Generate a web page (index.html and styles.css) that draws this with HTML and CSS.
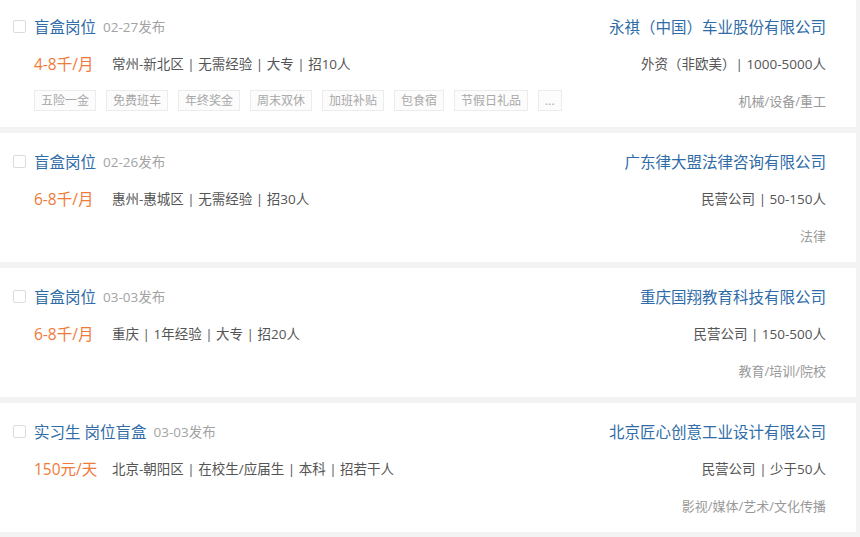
FILE: index.html
```html
<!DOCTYPE html>
<html lang="zh-CN">
<head>
<meta charset="utf-8">
<title>职位列表</title>
<link rel="stylesheet" href="styles.css">
</head>
<body>
<div class="list">
  <div class="card">
    <div class="left">
      <div class="row title-row"><span class="check"></span><span class="job">盲盒岗位</span><span class="date">02-27发布</span></div>
      <div class="row"><span class="salary">4-8千/月</span><span class="info">常州-新北区 | 无需经验 | 大专 | 招10人</span></div>
      <div class="row tags"><span class="tag">五险一金</span><span class="tag">免费班车</span><span class="tag">年终奖金</span><span class="tag">周末双休</span><span class="tag">加班补贴</span><span class="tag">包食宿</span><span class="tag">节假日礼品</span><span class="tag">...</span></div>
    </div>
    <div class="right">
      <div class="row company">永祺（中国）车业股份有限公司</div>
      <div class="row cinfo">外资（非欧美）| 1000-5000人</div>
      <div class="row industry">机械/设备/重工</div>
    </div>
  </div>
  <div class="card">
    <div class="left">
      <div class="row title-row"><span class="check"></span><span class="job">盲盒岗位</span><span class="date">02-26发布</span></div>
      <div class="row"><span class="salary">6-8千/月</span><span class="info">惠州-惠城区 | 无需经验 | 招30人</span></div>
      <div class="row"></div>
    </div>
    <div class="right">
      <div class="row company">广东律大盟法律咨询有限公司</div>
      <div class="row cinfo">民营公司 | 50-150人</div>
      <div class="row industry">法律</div>
    </div>
  </div>
  <div class="card">
    <div class="left">
      <div class="row title-row"><span class="check"></span><span class="job">盲盒岗位</span><span class="date">03-03发布</span></div>
      <div class="row"><span class="salary">6-8千/月</span><span class="info">重庆 | 1年经验 | 大专 | 招20人</span></div>
      <div class="row"></div>
    </div>
    <div class="right">
      <div class="row company">重庆国翔教育科技有限公司</div>
      <div class="row cinfo">民营公司 | 150-500人</div>
      <div class="row industry">教育/培训/院校</div>
    </div>
  </div>
  <div class="card">
    <div class="left">
      <div class="row title-row"><span class="check"></span><span class="job">实习生 岗位盲盒</span><span class="date">03-03发布</span></div>
      <div class="row"><span class="salary">150元/天</span><span class="info">北京-朝阳区 | 在校生/应届生 | 本科 | 招若干人</span></div>
      <div class="row"></div>
    </div>
    <div class="right">
      <div class="row company">北京匠心创意工业设计有限公司</div>
      <div class="row cinfo">民营公司 | 少于50人</div>
      <div class="row industry">影视/媒体/艺术/文化传播</div>
    </div>
  </div>
</div>
</body>
</html>
```

FILE: styles.css
```css
html, body {
  margin: 0;
  padding: 0;
  background: #f3f3f3;
}
body {
  width: 860px;
  height: 537px;
  overflow: hidden;
  font-family: "Open Sans", "Noto Sans CJK SC", sans-serif;
}
.list {
  margin-top: -2px;
  display: flex;
  flex-direction: column;
  gap: 6px;
}
.card {
  width: 856px;
  box-sizing: border-box;
  height: 129px;
  background: #fff;
  display: flex;
  justify-content: space-between;
  padding: 17px 30px 16px 13px;
}
.left, .right {
  display: flex;
  flex-direction: column;
  gap: 15px;
}
.right {
  align-items: flex-end;
}
.row {
  height: 22px;
  display: flex;
  align-items: center;
  white-space: nowrap;
}
.check {
  width: 13px;
  height: 13px;
  border: 1px solid #dcdcdc;
  border-radius: 2px;
  margin-right: 8px;
  box-sizing: border-box;
}
.job {
  font-size: 15.5px;
  color: #2f6ca8;
}
.date {
  font-size: 13.5px;
  color: #a3a3a3;
  margin-left: 7px;
}
.salary {
  margin-left: 21px;
  font-size: 15.5px;
  color: #ef7a3a;
  min-width: 78px;
}
.info {
  font-size: 13.5px;
  color: #555;
}
.tags {
  margin-left: 21px;
  gap: 10px;
}
.tag {
  font-size: 12px;
  color: #a8a8a8;
  border: 1px solid #ececec;
  background: #fcfcfc;
  height: 21px;
  box-sizing: border-box;
  padding: 0 6px;
  display: flex;
  align-items: center;
}
.company {
  font-size: 15.5px;
  color: #2f6ca8;
}
.cinfo {
  font-size: 13.5px;
  color: #555;
}
.industry {
  font-size: 13px;
  color: #999;
}
```
